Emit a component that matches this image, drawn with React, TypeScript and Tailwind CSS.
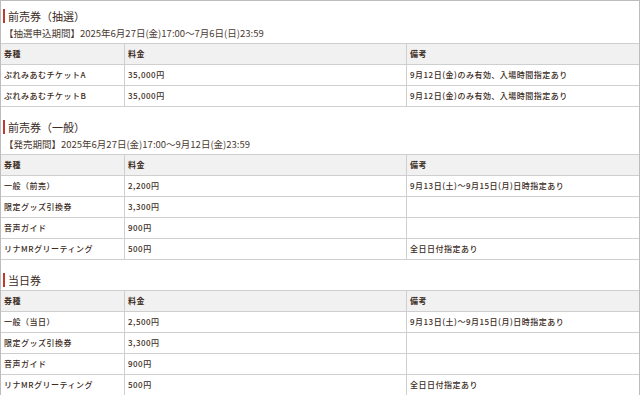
import React from "react";

type Row = [string, string, string];

interface Section {
  title: string;
  period?: string;
  rows: Row[];
}

const sections: Section[] = [
  {
    title: "前売券（抽選）",
    period: "【抽選申込期間】2025年6月27日(金)17:00〜7月6日(日)23:59",
    rows: [
      ["ぷれみあむチケットA", "35,000円", "9月12日(金)のみ有効、入場時間指定あり"],
      ["ぷれみあむチケットB", "35,000円", "9月12日(金)のみ有効、入場時間指定あり"],
    ],
  },
  {
    title: "前売券（一般）",
    period: "【発売期間】2025年6月27日(金)17:00〜9月12日(金)23:59",
    rows: [
      ["一般（前売）", "2,200円", "9月13日(土)〜9月15日(月)日時指定あり"],
      ["限定グッズ引換券", "3,300円", ""],
      ["音声ガイド", "900円", ""],
      ["リナMRグリーティング", "500円", "全日日付指定あり"],
    ],
  },
  {
    title: "当日券",
    rows: [
      ["一般（当日）", "2,500円", "9月13日(土)〜9月15日(月)日時指定あり"],
      ["限定グッズ引換券", "3,300円", ""],
      ["音声ガイド", "900円", ""],
      ["リナMRグリーティング", "500円", "全日日付指定あり"],
    ],
  },
];

function TableRow({ cells, head }: { cells: Row; head?: boolean }) {
  return (
    <div
      className={`grid h-[21px] grid-cols-[123px_282px_1fr] border-b border-[#cfcfcf] text-[8px] tracking-[0.5px] ${
        head ? "bg-[#f1f1f1] font-bold" : "bg-white font-medium"
      }`}
    >
      {cells.map((c, i) => (
        <div
          key={i}
          className={`flex items-center pl-[3px] ${i > 0 ? "border-l border-[#cfcfcf]" : ""}`}
        >
          {c}
        </div>
      ))}
    </div>
  );
}

export default function App() {
  return (
    <div
      className="h-[395px] w-[640px] overflow-hidden border-x border-t border-[#bdbdbd] bg-white text-[#3b2b23]"
      style={{ fontFamily: '"Noto Sans CJK JP", "Noto Sans", sans-serif' }}
    >
      {sections.map((s, idx) => (
        <section key={s.title} className={idx === 0 ? "pt-[8px]" : "pt-[13px]"}>
          <h2 className="ml-[2px] flex h-[14px] items-center border-l-[2px] border-[#c0392b] pl-[3px] text-[11px] leading-none">
            {s.title}
          </h2>
          {s.period && (
            <p className="mt-[3px] pl-[3px] text-[9.5px] leading-[14px] text-[#4a3a32]">{s.period}</p>
          )}
          <div className="mt-[3px] border-t border-[#cfcfcf]">
            <TableRow cells={["券種", "料金", "備考"]} head />
            {s.rows.map((r, i) => (
              <TableRow key={i} cells={r} />
            ))}
          </div>
        </section>
      ))}
    </div>
  );
}
